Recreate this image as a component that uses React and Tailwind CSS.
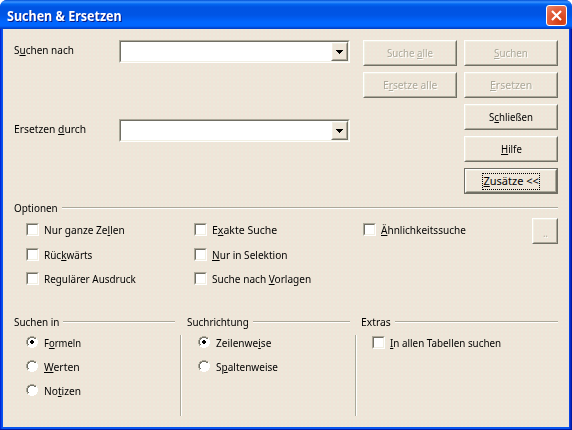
import { useLayoutEffect, useRef, useState } from "react";

// Text condensed to a fixed width; "_" precedes the access key.
function Label({ t, w, className = "" }) {
  const ref = useRef(null);
  const [scale, setScale] = useState(1);
  useLayoutEffect(() => {
    setScale(w / ref.current.offsetWidth);
  }, [t, w]);
  const i = t.indexOf("_");
  return (
    <span className={`block whitespace-nowrap ${className}`} style={{ width: w }}>
      <span ref={ref} className="inline-block origin-left align-top" style={{ transform: `scaleX(${scale})` }}>
        {i < 0 ? t : (
          <>
            {t.slice(0, i)}
            <span className="underline decoration-1 underline-offset-[1px]">{t[i + 1]}</span>
            {t.slice(i + 2)}
          </>
        )}
      </span>
    </span>
  );
}

const FACE = "bg-[#ede7da] bg-[image:linear-gradient(90deg,#f0e4d8_50%,transparent_50%),linear-gradient(#ebe9db_50%,#ece6d8_50%)] bg-[length:4px_4px]";

function Bevel({ className = "", children }) {
  return (
    <div className={`border border-t-white border-l-white border-r-[#716f64] border-b-[#716f64] ${className}`}>
      <div className="flex h-full w-full items-center justify-center border border-t-[#f1efe2] border-l-[#f1efe2] border-r-[#aca899] border-b-[#aca899]">
        {children}
      </div>
    </div>
  );
}

function Button({ t, w, disabled }) {
  return (
    <Bevel className="h-[26px] w-[94px] shrink-0">
      <Label t={t} w={w} className={disabled ? "text-[#aca899] [text-shadow:1px_1px_0_#fff]" : ""} />
    </Bevel>
  );
}

function Combo() {
  return (
    <div className="h-[23px] w-[231px] border border-t-[#aca899] border-l-[#aca899] border-r-white border-b-white">
      <div className="flex h-full justify-end border border-t-[#716f64] border-l-[#716f64] border-r-[#f1efe2] border-b-[#f1efe2] bg-white">
        <Bevel className={`h-[19px] w-[17px] ${FACE}`}>
          <svg width="7" height="4" viewBox="0 0 7 4" shapeRendering="crispEdges">
            <path d="M0 0h7v1H0zM1 1h5v1H1zM2 2h3v1H2zM3 3h1v1H3z" />
          </svg>
        </Bevel>
      </div>
    </div>
  );
}

function Check({ t, w, className = "" }) {
  return (
    <div className={`flex h-[13px] gap-[5px] ${className}`}>
      <div className="h-[13px] w-[13px] shrink-0 border border-t-[#aca899] border-l-[#aca899] border-r-white border-b-white">
        <div className="h-full border border-t-[#716f64] border-l-[#716f64] border-r-[#f1efe2] border-b-[#f1efe2] bg-white" />
      </div>
      <Label t={t} w={w} />
    </div>
  );
}

function Radio({ t, w, on }) {
  return (
    <div className="flex h-[12px] gap-[6px]">
      <svg className="shrink-0" width="12" height="12" viewBox="0 0 12 12" shapeRendering="crispEdges">
        <path fill="#fff" d="M4 1h4v1h2v2h1v4h-1v2H8v1H4v-1H2V8H1V4h1V2h2z" />
        <path fill="#aca899" d="M4 0h4v1H4zM2 1h2v1H2zM8 1h2v1H8zM1 2h1v2H1zM0 4h1v4H0zM1 8h1v2H1z" />
        <path fill="#716f64" d="M4 1h4v1H4zM2 2h2v1H2zM8 2h2v1H8zM2 3h1v1H2zM1 4h1v4H1zM2 8h1v1H2z" />
        <path fill="#fff" d="M10 2h1v2h-1zM11 4h1v4h-1zM10 8h1v2h-1zM8 10h2v1H8zM4 11h4v1H4zM2 10h2v1H2z" />
        {on && <path d="M5 4h2v1h1v2H7v1H5V7H4V5h1z" />}
      </svg>
      <Label t={t} w={w} />
    </div>
  );
}

function Caption({ t, w }) {
  return (
    <div className="flex h-[14px] gap-[4px]">
      <Label t={t} w={w} className="shrink-0" />
      <div className="mt-[6px] h-[2px] flex-1 border-t border-b border-t-[#aca899] border-b-white" />
    </div>
  );
}

function Divider() {
  return <div className="mt-[20px] h-[81px] w-[2px] border-r border-l border-l-[#aca899] border-r-white" />;
}

export default function App() {
  return (
    <div className="h-[430px] w-[572px] overflow-hidden bg-white font-['Noto_Sans',sans-serif] text-[11px] leading-[14px] text-black">
      <div className="flex h-full flex-col overflow-hidden rounded-t-[7px] bg-[#0831d9]">
        <header className="flex h-[29px] shrink-0 items-center justify-between bg-[linear-gradient(#0050d8_0px,#3a93ff_2px,#0268f2_4px,#0054e3_7px,#0055e5_15px,#0066ff_22px,#0066ff_26px,#0045d0_28px,#0040c8_29px)] pr-[5px] pl-[7px] font-bold text-white">
          <Label t="Suchen & Ersetzen" w={115} className="mt-[3px] text-[13.5px] leading-[18px] [text-shadow:1px_1px_0_#0a1883]" />
          <div className="mt-[2px] flex h-[21px] w-[21px] items-center justify-center rounded-[3px] border border-white bg-[radial-gradient(circle_at_70%_80%,#d03a10,#e35f3c_60%,#e98b70)]">
            <svg className="shrink-0" width="13" height="13" viewBox="0 0 13 13">
              <path d="M2 2l9 9M11 2l-9 9" stroke="#fff" strokeWidth="2.2" />
            </svg>
          </div>
        </header>
        <div className="flex min-h-0 flex-1 border-b border-[#0019a0] bg-[linear-gradient(90deg,#0019cf_0px,#0855ef_2px,#0855ef_3px,#0855ef_569px,#0831d9_570px,#00138c_572px)] px-[3px] pb-[2px]">
          <main className={`min-w-0 flex-1 px-[11px] pt-[11px] ${FACE}`}>
            <section className="flex h-[161px]">
              <div className="w-[105px] pt-[3px]">
                <Label t="S_uchen nach" w={60} />
                <Label t="Ersetzen _durch" w={72} className="mt-[65px]" />
              </div>
              <div className="flex w-[244px] flex-col gap-[56px]">
                <Combo />
                <Combo />
              </div>
              <div className="flex w-[101px] flex-col gap-[6px]">
                <Button t="Suche _alle" w={46} disabled />
                <Button t="E_rsetze alle" w={54} disabled />
              </div>
              <div className="flex flex-col gap-[6px]">
                <Button t="_Suchen" w={34} disabled />
                <Button t="_Ersetzen" w={42} disabled />
                <Button t="S_chließen" w={44} />
                <Button t="_Hilfe" w={21} />
                <div className="h-[26px] w-[94px] border border-[#716f64]">
                  <Bevel className="h-full w-full">
                    <div className="flex h-[17px] w-[58px] items-center justify-center border border-dotted border-black">
                      <Label t="_Zusätze <<" w={55} />
                    </div>
                  </Bevel>
                </div>
              </div>
            </section>
            <section className="h-[114px]">
              <Caption t="Optionen" w={44} />
              <div className="flex pt-[3px] pl-[12px]">
                <div className="flex w-[168px] flex-col gap-[12px] pt-[5px]">
                  <Check t="Nur ganze Ze_llen" w={81} />
                  <Check t="Rüc_kwärts" w={48} />
                  <Check t="Re_gulärer Ausdruck" w={92} className="-mt-px" />
                </div>
                <div className="flex w-[169px] flex-col gap-[12px] pt-[5px]">
                  <Check t="E_xakte Suche" w={65} />
                  <Check t="_Nur in Selektion" w={76} />
                  <Check t="Suche nach _Vorlagen" w={99} className="-mt-px" />
                </div>
                <div className="w-[169px] pt-[5px]">
                  <Check t="_Ähnlichkeitssuche" w={85} />
                </div>
                <Bevel className="h-[26px] w-[26px]">
                  <Label t=".." w={5} className="mt-[4px] text-[#aca899] [text-shadow:1px_1px_0_#fff]" />
                </Bevel>
              </div>
            </section>
            <section className="flex">
              <div className="w-[166px]">
                <div className="w-[161px]"><Caption t="Suchen in" w={45} /></div>
                <div className="flex flex-col gap-[12px] pt-[7px] pl-[12px]">
                  <Radio t="F_ormeln" w={37} on />
                  <Radio t="_Werten" w={36} />
                  <Radio t="No_tizen" w={37} />
                </div>
              </div>
              <Divider />
              <div className="w-[173px] pl-[5px]">
                <div className="w-[163px]"><Caption t="Suchrichtung" w={62} /></div>
                <div className="flex flex-col gap-[12px] pt-[7px] pl-[11px]">
                  <Radio t="Zeilenwe_ise" w={55} on />
                  <Radio t="S_paltenweise" w={62} />
                </div>
              </div>
              <Divider />
              <div className="flex-1 pl-[4px]">
                <Caption t="Extras" w={30} />
                <div className="pt-[7px] pl-[11px]">
                  <Check t="_In allen Tabellen suchen" w={111} />
                </div>
              </div>
            </section>
          </main>
        </div>
      </div>
    </div>
  );
}
